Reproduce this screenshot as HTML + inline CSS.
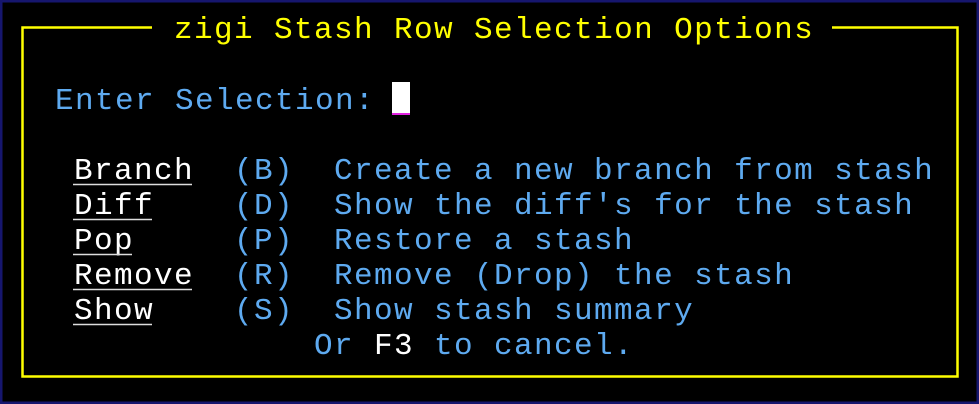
<!DOCTYPE html>
<html><head><meta charset="utf-8"><style>
html,body{margin:0;padding:0;background:#000;}
svg{display:block}
text{font-family:"Liberation Mono",monospace;font-size:31px;letter-spacing:1.4px;white-space:pre}
</style></head><body>
<svg width="979" height="404" xmlns="http://www.w3.org/2000/svg">
<rect x="0" y="0" width="979" height="404" fill="#000"/>
<rect x="1" y="1" width="977" height="402" fill="none" stroke="#16166e" stroke-width="3"/>
<g stroke="#ffff00" stroke-width="2.5" fill="none">
<polyline points="152,27.5 22.5,27.5 22.5,376.5 957.5,376.5 957.5,27.5 832,27.5"/>
</g>
<text x="174" y="38" fill="#ffff00">zigi Stash Row Selection Options</text>
<text x="55" y="109" fill="#5eaaf0">Enter Selection:</text>
<rect x="392" y="82" width="18" height="32" fill="#fff"/>
<rect x="392" y="113" width="18" height="2" fill="#e020e0"/>
<g fill="#fff">
<text x="74" y="179">Branch</text>
<text x="74" y="214">Diff</text>
<text x="74" y="249">Pop</text>
<text x="74" y="284">Remove</text>
<text x="74" y="319">Show</text>
</g>
<g stroke="#ddd" stroke-width="1.5">
<line x1="73" y1="184.5" x2="192" y2="184.5"/>
<line x1="73" y1="219.5" x2="152" y2="219.5"/>
<line x1="73" y1="254.5" x2="132" y2="254.5"/>
<line x1="73" y1="289.5" x2="192" y2="289.5"/>
<line x1="73" y1="324.5" x2="152" y2="324.5"/>
</g>
<g fill="#5eaaf0">
<text x="234" y="179">(B)  Create a new branch from stash</text>
<text x="234" y="214">(D)  Show the diff's for the stash</text>
<text x="234" y="249">(P)  Restore a stash</text>
<text x="234" y="284">(R)  Remove (Drop) the stash</text>
<text x="234" y="319">(S)  Show stash summary</text>
<text x="314" y="354">Or <tspan fill="#fff">F3</tspan> to cancel.</text>
</g>
</svg>
</body></html>
